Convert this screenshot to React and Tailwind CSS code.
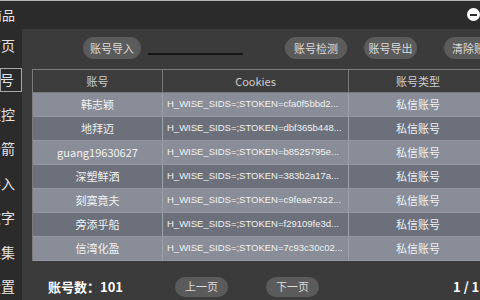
import React from "react";

const rows = [
  { name: "韩志颖", cookie: "H_WISE_SIDS=;STOKEN=cfa0f5bbd2..." },
  { name: "地拜迈", cookie: "H_WISE_SIDS=;STOKEN=dbf365b448..." },
  { name: "guang19630627", cookie: "H_WISE_SIDS=;STOKEN=b8525795e..." },
  { name: "深塑鲜洒", cookie: "H_WISE_SIDS=;STOKEN=383b2a17a..." },
  { name: "刻寞竟夫", cookie: "H_WISE_SIDS=;STOKEN=c9feae7322..." },
  { name: "旁添乎船", cookie: "H_WISE_SIDS=;STOKEN=f29109fe3d..." },
  { name: "信湾化盈", cookie: "H_WISE_SIDS=;STOKEN=7c93c30c02..." },
];

const menu = ["首页", "账号", "监控", "分箭", "导入", "文字", "采集", "设置"];

function App() {
  return (
    <div
      className="w-[480px] h-[300px] overflow-hidden bg-[#2b2b2b] flex flex-col text-[#e6e6e6]"
      style={{ fontFamily: '"Noto Sans CJK SC", "Noto Sans", sans-serif' }}
    >
      {/* top bar */}
      <div className="h-[29px] shrink-0 relative border-t border-[#b5b5b5] flex items-center">
        <span className="text-[13px] -ml-[11px] text-[#e8e8e8] whitespace-nowrap">商品</span>
        <div className="absolute right-[0px] top-[7px] w-[13px] h-[13px] rounded-full bg-white flex items-center justify-center">
          <div className="w-[7px] h-[2px] bg-[#2b2b2b]" />
        </div>
      </div>

      <div className="flex flex-1 min-h-0">
        {/* sidebar */}
        <div className="w-[22px] shrink-0 flex flex-col -mt-[1px] overflow-hidden">
          {menu.map((m, i) => (
            <div key={m} className="h-[34.5px] shrink-0 flex items-center">
              <div
                className={`w-[22px] h-[24px] flex items-center justify-end overflow-hidden ${
                  i === 1 ? "border border-[#a8a8a8]" : ""
                }`}
              >
                <span className="text-[14px] whitespace-nowrap pr-[7px] text-[#e4e4e4]">{m}</span>
              </div>
            </div>
          ))}
        </div>

        {/* main */}
        <div className="flex-1 bg-[#3b3b3b] overflow-hidden flex flex-col">
          <div className="flex items-center h-[22px] mt-[8px] pl-[61px] whitespace-nowrap text-[11px]">
            <button className="w-[58px] h-[22px] rounded-full bg-[#5b5b5b] text-[#dcdcdc] shrink-0">账号导入</button>
            <div className="w-[95px] h-[1.5px] bg-[#161616] ml-[7px] mt-[12px] shrink-0" />
            <button className="w-[62px] h-[22px] rounded-full bg-[#5b5b5b] text-[#dcdcdc] ml-[42px] shrink-0">账号检测</button>
            <button className="w-[53px] h-[22px] rounded-full bg-[#5b5b5b] text-[#dcdcdc] ml-[17px] shrink-0">账号导出</button>
            <button className="w-[62px] h-[22px] rounded-full bg-[#5b5b5b] text-[#dcdcdc] ml-[27px] shrink-0 text-left pl-[8px]">清除账号</button>
          </div>

          {/* table */}
          <div className="ml-[10px] mt-[10px] w-[470px] border-l border-t border-[#7a7a7a] text-[11px]">
            <div className="flex h-[23px] bg-[#3d3d3d] text-[#cfcfcf] border-b border-[#7a7a7a]">
              <div className="w-[130px] flex items-center justify-center border-r border-[#7a7a7a]">账号</div>
              <div className="w-[186px] flex items-center justify-center border-r border-[#7a7a7a]">Cookies</div>
              <div className="flex-1 flex items-center justify-center pr-[15px]">账号类型</div>
            </div>
            {rows.map((r, i) => (
              <div
                key={r.name}
                className={`flex h-[24px] text-[#f2f2f2] border-b border-[#9298a2] ${
                  i % 2 === 0 ? "bg-[#888d97]" : "bg-[#6b707b]"
                }`}
              >
                <div className="w-[130px] flex items-center justify-center border-r border-[#9ba1ab]">{r.name}</div>
                <div className="w-[186px] flex items-center pl-[4px] border-r border-[#9ba1ab] whitespace-nowrap overflow-hidden font-['Liberation_Sans',sans-serif] text-[9.5px]">
                  {r.cookie}
                </div>
                <div className="flex-1 flex items-center justify-center pr-[15px]">私信账号</div>
              </div>
            ))}
          </div>

          {/* footer */}
          <div className="flex items-center mt-[15px] h-[21px] whitespace-nowrap">
            <span className="shrink-0 ml-[26px] text-[13px] font-bold text-white">账号数：101</span>
            <button className="shrink-0 ml-[52px] w-[53px] h-[20px] rounded-full bg-[#5b5b5b] text-[11px] text-[#dcdcdc]">上一页</button>
            <button className="shrink-0 ml-[38px] w-[53px] h-[20px] rounded-full bg-[#5b5b5b] text-[11px] text-[#dcdcdc]">下一页</button>
            <span className="shrink-0 ml-[134px] text-[13px] font-bold text-white">1 / 11</span>
          </div>
        </div>
      </div>
    </div>
  );
}

export default App;
